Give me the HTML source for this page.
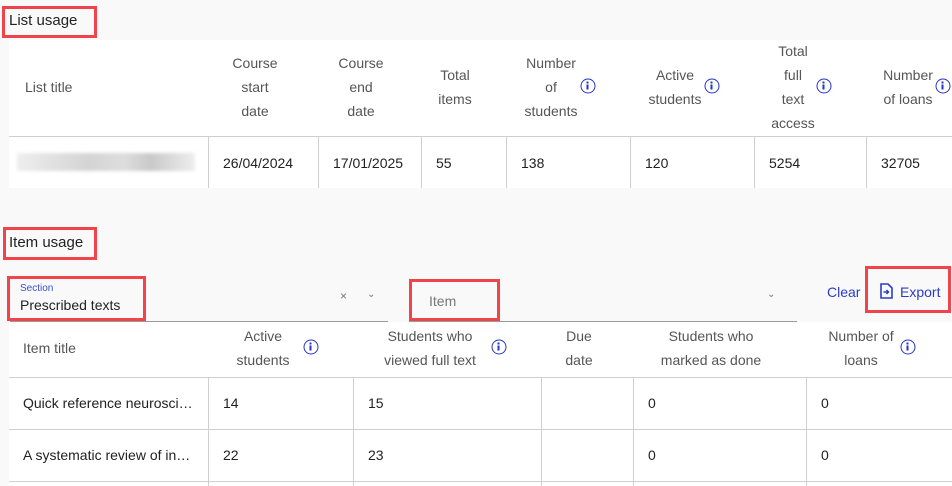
<!DOCTYPE html>
<html><head><meta charset="utf-8"><style>
*{margin:0;padding:0;box-sizing:border-box}
body{width:952px;height:486px;background:#f9f9f9;font-family:"Liberation Sans",sans-serif;position:relative;overflow:hidden;color:#222}
.a{position:absolute;white-space:nowrap}
.w{position:absolute;background:#fff}
.h{position:absolute;height:1px;background:#cfcfcf}
.v{position:absolute;width:1px;background:#cfcfcf}
.t{position:absolute;font-size:14px;color:#555;text-align:center;line-height:24px;transform:translateX(-50%);white-space:nowrap}
.c{position:absolute;font-size:14px;color:#222;transform:translateY(-50%);white-space:nowrap}
.r{position:absolute;border:3px solid #f0444a}
.i{position:absolute;width:15px;height:15px;border:1.6px solid #2633c8;border-radius:50%;transform:translate(-50%,-50%)}
.i:before{content:"";position:absolute;left:5.2px;top:2px;width:2px;height:2px;background:#2633c8}
.i:after{content:"";position:absolute;left:5.2px;top:5px;width:2px;height:5px;background:#2633c8}
</style></head><body>
<div class="r" style="left:2px;top:6px;width:95px;height:32px"></div>
<div class="a" style="left:9px;top:12px;font-size:15px">List usage</div>
<div class="w" style="left:9px;top:40px;width:943px;height:148px"></div>
<div class="h" style="left:9px;top:136px;width:943px"></div>
<div class="v" style="left:208px;top:137px;height:51px"></div>
<div class="v" style="left:318px;top:137px;height:51px"></div>
<div class="v" style="left:421px;top:137px;height:51px"></div>
<div class="v" style="left:506px;top:137px;height:51px"></div>
<div class="v" style="left:630px;top:137px;height:51px"></div>
<div class="v" style="left:754px;top:137px;height:51px"></div>
<div class="v" style="left:866px;top:137px;height:51px"></div>
<div class="t" style="left:25px;top:75px;transform:none">List title</div>
<div class="t" style="left:255px;top:51px">Course<br>start<br>date</div>
<div class="t" style="left:361px;top:51px">Course<br>end<br>date</div>
<div class="t" style="left:455px;top:63px">Total<br>items</div>
<div class="t" style="left:551px;top:51px">Number<br>of<br>students</div>
<div class="i" style="left:588px;top:86px"></div>
<div class="t" style="left:675px;top:63px">Active<br>students</div>
<div class="i" style="left:712px;top:86px"></div>
<div class="t" style="left:793px;top:39px">Total<br>full<br>text<br>access</div>
<div class="i" style="left:824px;top:86px"></div>
<div class="t" style="left:908px;top:63px">Number<br>of loans</div>
<div class="i" style="left:943px;top:86px"></div>
<div class="a" style="left:17px;top:153px;width:178px;height:18px;background:linear-gradient(90deg,#eee,#d4d4d4 40%,#ddd 60%,#c9c9c9 75%,#eee);filter:blur(1.5px)"></div>
<div class="c" style="left:223px;top:163px">26/04/2024</div>
<div class="c" style="left:333px;top:163px">17/01/2025</div>
<div class="c" style="left:436px;top:163px">55</div>
<div class="c" style="left:521px;top:163px">138</div>
<div class="c" style="left:645px;top:163px">120</div>
<div class="c" style="left:769px;top:163px">5254</div>
<div class="c" style="left:881px;top:163px">32705</div>

<div class="r" style="left:3px;top:227px;width:94px;height:33px"></div>
<div class="a" style="left:9px;top:234px;font-size:15px">Item usage</div>
<div class="r" style="left:7px;top:276px;width:139px;height:45px"></div>
<div class="a" style="left:20px;top:283px;font-size:10px;color:#3a4fd0">Section</div>
<div class="a" style="left:20px;top:297px;font-size:14px">Prescribed texts</div>
<div class="a" style="left:340px;top:289px;font-size:12px;color:#777">×</div>
<div class="a" style="left:367px;top:289px;font-size:10px;color:#777">⌄</div>
<div class="a" style="left:10px;top:321px;width:378px;height:1px;background:#999"></div>
<div class="r" style="left:409px;top:279px;width:91px;height:42px"></div>
<div class="a" style="left:429px;top:293px;font-size:14px;color:#777">Item</div>
<div class="a" style="left:767px;top:289px;font-size:10px;color:#777">⌄</div>
<div class="a" style="left:409px;top:321px;width:388px;height:1px;background:#999"></div>
<div class="a" style="left:827px;top:284px;font-size:14px;color:#2a3cc8">Clear</div>
<div class="r" style="left:865px;top:266px;width:86px;height:47px"></div>
<svg class="a" style="left:880px;top:283px" width="13" height="16" viewBox="0 0 13 16"><path d="M1 1h7l4 4v10H1z" fill="none" stroke="#2a3cc8" stroke-width="1.6"/><path d="M3.5 9h5M6.5 7l2 2-2 2" fill="none" stroke="#2a3cc8" stroke-width="1.5"/></svg>
<div class="a" style="left:900px;top:284px;font-size:14px;color:#2a3cc8">Export</div>

<div class="w" style="left:9px;top:322px;width:943px;height:164px"></div>
<div class="h" style="left:9px;top:377px;width:943px"></div>
<div class="h" style="left:9px;top:429px;width:943px"></div>
<div class="h" style="left:9px;top:481px;width:943px"></div>
<div class="v" style="left:208px;top:378px;height:108px"></div>
<div class="v" style="left:353px;top:378px;height:108px"></div>
<div class="v" style="left:541px;top:378px;height:108px"></div>
<div class="v" style="left:633px;top:378px;height:108px"></div>
<div class="v" style="left:806px;top:378px;height:108px"></div>
<div class="t" style="left:23px;top:336px;transform:none">Item title</div>
<div class="t" style="left:263px;top:324px">Active<br>students</div>
<div class="i" style="left:311px;top:347px"></div>
<div class="t" style="left:430px;top:324px">Students who<br>viewed full text</div>
<div class="i" style="left:499px;top:347px"></div>
<div class="t" style="left:579px;top:324px">Due<br>date</div>
<div class="t" style="left:711px;top:324px">Students who<br>marked as done</div>
<div class="t" style="left:861px;top:324px">Number of<br>loans</div>
<div class="i" style="left:908px;top:347px"></div>
<div class="c" style="left:23px;top:403px">Quick reference neurosci…</div>
<div class="c" style="left:223px;top:403px">14</div>
<div class="c" style="left:368px;top:403px">15</div>
<div class="c" style="left:648px;top:403px">0</div>
<div class="c" style="left:821px;top:403px">0</div>
<div class="c" style="left:23px;top:455px">A systematic review of in…</div>
<div class="c" style="left:223px;top:455px">22</div>
<div class="c" style="left:368px;top:455px">23</div>
<div class="c" style="left:648px;top:455px">0</div>
<div class="c" style="left:821px;top:455px">0</div>
</body></html>
